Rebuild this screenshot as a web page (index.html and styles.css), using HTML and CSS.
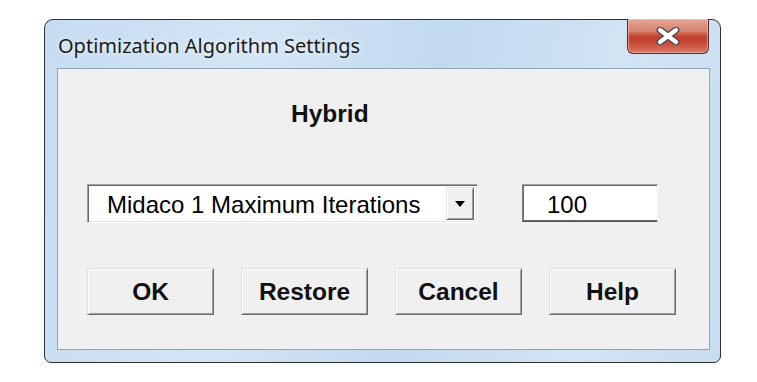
FILE: index.html
```html
<!DOCTYPE html>
<html>
<head>
<meta charset="utf-8">
<link rel="stylesheet" href="styles.css">
</head>
<body>
<div class="window">
  <div class="titlebar">
    <div class="title">Optimization Algorithm Settings</div>
    <div class="close">
      <svg width="26" height="18" viewBox="0 0 26 18">
        <path d="M5 3 L21 15 M21 3 L5 15" stroke="#4a4a52" stroke-width="7" stroke-linecap="round" fill="none"/>
        <path d="M5 3 L21 15 M21 3 L5 15" stroke="#ffffff" stroke-width="4.2" stroke-linecap="round" fill="none"/>
      </svg>
    </div>
  </div>
  <div class="client">
    <div class="heading">Hybrid</div>
    <div class="row">
      <div class="combo">
        <span class="combo-text">Midaco 1 Maximum Iterations</span>
        <span class="combo-btn"><span class="arrow"></span></span>
      </div>
      <div class="field">100</div>
    </div>
    <div class="buttons">
      <div class="btn">OK</div>
      <div class="btn">Restore</div>
      <div class="btn">Cancel</div>
      <div class="btn">Help</div>
    </div>
  </div>
</div>
</body>
</html>
```
FILE: styles.css
```css
html, body {
  margin: 0;
  padding: 0;
  background: #ffffff;
}
body {
  padding: 19px 0 0 44px;
}
.window {
  box-sizing: border-box;
  width: 677px;
  height: 344px;
  border: 1px solid #2e3136;
  border-radius: 9px 9px 7px 7px;
  background: linear-gradient(100deg, #c6dcf1 0%, #d3e5f5 30%, #c2d9ef 55%, #d2e4f4 80%, #c8ddf1 100%);
  display: flex;
  flex-direction: column;
  padding: 0 10px 12px 12px;
}
.titlebar {
  height: 48px;
  display: flex;
  align-items: flex-start;
  justify-content: space-between;
}
.title {
  font-family: "Noto Sans", "Open Sans", sans-serif;
  font-size: 20px;
  color: #1b1b1b;
  padding-left: 1px;
  margin-top: 12px;
  text-shadow: 0 0 6px rgba(255,255,255,0.9);
}
.close {
  box-sizing: border-box;
  width: 82px;
  height: 35px;
  margin-top: -1px;
  margin-right: 1px;
  border: 1px solid #5a2a24;
  border-top: none;
  border-radius: 0 0 6px 6px;
  background: linear-gradient(180deg, #e6a597 0%, #d8836f 35%, #c2402e 52%, #c74a37 70%, #d97a64 100%);
  box-shadow: inset 0 0 0 1px rgba(255,200,190,0.55);
  display: flex;
  align-items: center;
  justify-content: center;
}
.client {
  flex: 1;
  border: 1px solid #8fa5bb;
  background: #f0f0f0;
  padding: 0 0 0 29px;
  display: flex;
  flex-direction: column;
}
.heading {
  font-family: "Liberation Sans", Arial, sans-serif;
  font-weight: bold;
  font-size: 24.5px;
  line-height: 25px;
  color: #111;
  margin-top: 32px;
  padding-left: 204px;
}
.row {
  display: flex;
  align-items: flex-start;
  margin-top: 58px;
}
.combo {
  box-sizing: border-box;
  width: 391px;
  height: 39px;
  background: #ffffff;
  border: 1px solid;
  border-color: #a0a0a0 #ffffff #ffffff #a0a0a0;
  box-shadow: inset 1px 1px 0 #696969, inset -1px -1px 0 #e3e3e3;
  display: flex;
  align-items: center;
  justify-content: space-between;
  padding: 0 3px 0 19px;
}
.combo-text {
  font-family: "Liberation Sans", Arial, sans-serif;
  font-size: 24px;
  color: #000;
  line-height: 1;
  margin-top: 2px;
}
.combo-btn {
  box-sizing: border-box;
  width: 28px;
  height: 33px;
  background: #f0f0f0;
  border: 1px solid;
  border-color: #e3e3e3 #696969 #696969 #e3e3e3;
  box-shadow: inset 1px 1px 0 #ffffff, inset -1px -1px 0 #a0a0a0;
  display: flex;
  align-items: center;
  justify-content: center;
}
.arrow {
  width: 0;
  height: 0;
  border-left: 5px solid transparent;
  border-right: 5px solid transparent;
  border-top: 6px solid #000;
  margin-top: 1px;
}
.field {
  box-sizing: border-box;
  width: 136px;
  height: 38px;
  margin-left: 44px;
  background: #ffffff;
  border: 1px solid;
  border-color: #a0a0a0 #f8f8f8 #555555 #808080;
  box-shadow: inset 1px 1px 0 #696969, inset 0 -1px 0 #6a6a6a;
  font-family: "Liberation Sans", Arial, sans-serif;
  font-size: 24px;
  line-height: 1;
  color: #000;
  padding: 8px 0 0 24px;
}
.buttons {
  display: flex;
  gap: 27px;
  margin-top: 45px;
}
.btn {
  box-sizing: border-box;
  width: 127px;
  height: 47px;
  background: #f0f0f0;
  border: 1px solid;
  border-color: #e0e0e0 #6a6a6a #6a6a6a #e0e0e0;
  box-shadow: inset 1px 1px 0 #ffffff, inset -1px -1px 0 #a0a0a0;
  display: flex;
  align-items: center;
  justify-content: center;
  font-family: "Liberation Sans", Arial, sans-serif;
  font-weight: bold;
  font-size: 24.5px;
  color: #111;
  padding-top: 1px;
}
```
